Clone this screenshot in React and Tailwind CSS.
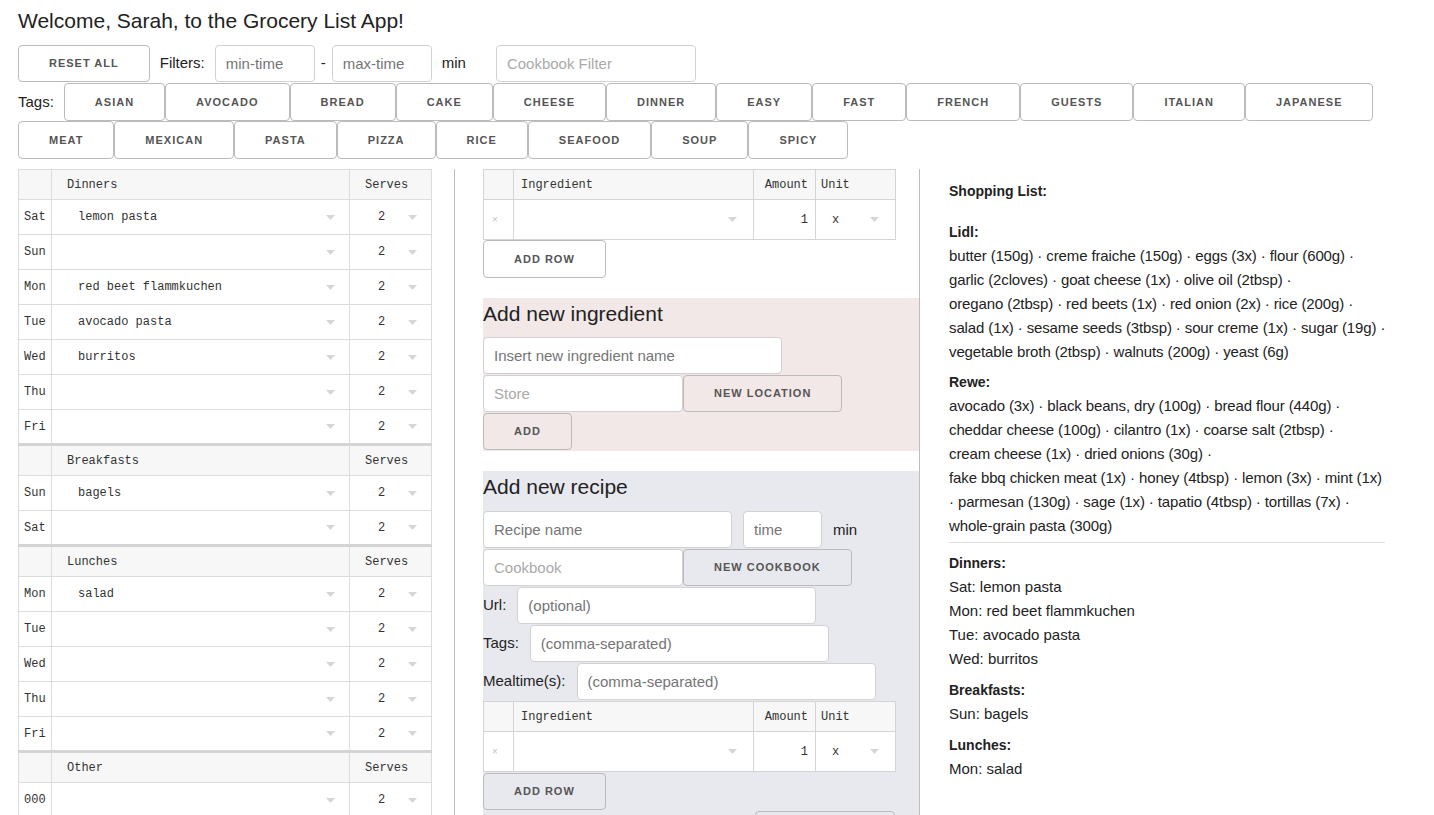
import React from 'react'

const TAGS = [
  'asian', 'avocado', 'bread', 'cake', 'cheese', 'dinner', 'easy', 'fast', 'french', 'guests',
  'italian', 'japanese', 'meat', 'mexican', 'pasta', 'pizza', 'rice', 'seafood', 'soup', 'spicy',
]

const MEALS = [
  { name: 'Dinners', rows: [['Sat', 'lemon pasta'], ['Sun', ''], ['Mon', 'red beet flammkuchen'], ['Tue', 'avocado pasta'], ['Wed', 'burritos'], ['Thu', ''], ['Fri', '']] },
  { name: 'Breakfasts', rows: [['Sun', 'bagels'], ['Sat', '']] },
  { name: 'Lunches', rows: [['Mon', 'salad'], ['Tue', ''], ['Wed', ''], ['Thu', ''], ['Fri', '']] },
  { name: 'Other', rows: [['000', '']] },
]

const STORES = [
  {
    name: 'Lidl',
    lines: [
      'butter (150g) · creme fraiche (150g) · eggs (3x) · flour (600g) ·',
      'garlic (2cloves) · goat cheese (1x) · olive oil (2tbsp) ·',
      'oregano (2tbsp) · red beets (1x) · red onion (2x) · rice (200g) ·',
      'salad (1x) · sesame seeds (3tbsp) · sour creme (1x) · sugar (19g) ·',
      'vegetable broth (2tbsp) · walnuts (200g) · yeast (6g)',
    ],
  },
  {
    name: 'Rewe',
    lines: [
      'avocado (3x) · black beans, dry (100g) · bread flour (440g) ·',
      'cheddar cheese (100g) · cilantro (1x) · coarse salt (2tbsp) ·',
      'cream cheese (1x) · dried onions (30g) ·',
      'fake bbq chicken meat (1x) · honey (4tbsp) · lemon (3x) · mint (1x)',
      '· parmesan (130g) · sage (1x) · tapatio (4tbsp) · tortillas (7x) ·',
      'whole-grain pasta (300g)',
    ],
  },
]

const PLAN = [
  { name: 'Dinners', lines: ['Sat: lemon pasta', 'Mon: red beet flammkuchen', 'Tue: avocado pasta', 'Wed: burritos'] },
  { name: 'Breakfasts', lines: ['Sun: bagels'] },
  { name: 'Lunches', lines: ['Mon: salad'] },
]

// skeleton-ish button, height set per use
const btn = 'shrink-0 px-[30px] border border-[#bbb] rounded-[4px] bg-transparent text-[11px] font-semibold tracking-[1px] uppercase text-[#555] whitespace-nowrap'
const input = 'h-[37px] px-[10px] border border-[#d1d1d1] rounded-[4px] bg-white text-[15px] text-[#222] placeholder:text-[#757575] outline-none'

function Caret() {
  return (
    <svg width="9" height="5" viewBox="0 0 9 5" className="shrink-0">
      <polygon points="0,0 9,0 4.5,5" fill="#d6d6d6" />
    </svg>
  )
}

// ── Meal plan table ──────────────────────────────────────────

function MealTable() {
  const cell = 'border border-[#dcdcdc] p-0'
  return (
    <table className="w-[413px] border-collapse font-['Liberation_Mono','Courier_New',monospace] text-[12px] text-[#333] table-fixed">
      <colgroup>
        <col className="w-[33px]" />
        <col className="w-[298px]" />
        <col className="w-[82px]" />
      </colgroup>
      <tbody>
        {MEALS.map((meal, gi) => (
          <React.Fragment key={meal.name}>
            <tr className={`bg-[#f7f7f7] ${gi > 0 ? 'h-[31px] border-t-[3px] border-t-[#d4d4d4]' : 'h-[30px]'}`}>
              <td className={cell} />
              <td className={`${cell} pl-[15px]`}>{meal.name}</td>
              <td className={`${cell} pl-[15px]`}>Serves</td>
            </tr>
            {meal.rows.map(([day, dish], i) => (
              <tr key={i} className="h-[35px] bg-white">
                <td className={`${cell} pl-[5px]`}>{day}</td>
                <td className={cell}>
                  <div className="flex items-center justify-between pl-[26px] pr-[14px]">
                    <span>{dish}</span>
                    <Caret />
                  </div>
                </td>
                <td className={cell}>
                  <div className="flex items-center justify-between pl-[28px] pr-[14px]">
                    <span>2</span>
                    <Caret />
                  </div>
                </td>
              </tr>
            ))}
          </React.Fragment>
        ))}
      </tbody>
    </table>
  )
}

// ── Ingredient table ─────────────────────────────────────────

function IngredientTable() {
  const cell = 'border border-[#d4d4d4] p-0'
  return (
    <table className="w-[412px] border-collapse font-['Liberation_Mono','Courier_New',monospace] text-[12px] text-[#333] table-fixed">
      <colgroup>
        <col className="w-[30px]" />
        <col className="w-[240px]" />
        <col className="w-[62px]" />
        <col className="w-[80px]" />
      </colgroup>
      <tbody>
        <tr className="h-[30px] bg-[#f7f7f7]">
          <td className={cell} />
          <td className={`${cell} pl-[7px]`}>Ingredient</td>
          <td className={`${cell} pr-[7px] text-right`}>Amount</td>
          <td className={`${cell} pl-[5px]`}>Unit</td>
        </tr>
        <tr className="h-[40px] bg-white">
          <td className={`${cell} pl-[8px] text-[10px] text-[#c4c4c4] font-['Liberation_Sans',Arial,sans-serif]`}>×</td>
          <td className={cell}>
            <div className="flex justify-end pr-[16px]"><Caret /></div>
          </td>
          <td className={`${cell} pr-[7px] text-right`}>1</td>
          <td className={cell}>
            <div className="flex items-center justify-between pl-[16px] pr-[16px]">
              <span>x</span>
              <Caret />
            </div>
          </td>
        </tr>
      </tbody>
    </table>
  )
}

// ── Forms column ─────────────────────────────────────────────

function Forms() {
  return (
    <div className="w-[466px] shrink-0 border-x border-[#bdbdbd] pl-[28px] pb-10">
      <IngredientTable />
      <div className="flex">
        <button className={`${btn} h-[38px]`}>Add row</button>
      </div>

      <div className="mt-[20px] bg-[#f1e8e7] pb-[1px] flex flex-col gap-[1px]">
        <h4 className="text-[21px] leading-[32px] text-[#222] mb-[6px]">Add new ingredient</h4>
        <div className="flex">
          <input className={`${input} w-[299px]`} placeholder="Insert new ingredient name" />
        </div>
        <div className="flex items-center">
          <input className={`${input} h-[35px] w-[200px] placeholder:text-[#aaa]`} placeholder="Store" />
          <button className={`${btn} h-[37px]`}>New location</button>
        </div>
        <div className="flex">
          <button className={`${btn} h-[37px]`}>Add</button>
        </div>
      </div>

      <div className="mt-[20px] bg-[#e8e9ee] flex flex-col gap-[1px]">
        <h4 className="text-[21px] leading-[32px] text-[#222] mb-[7px]">Add new recipe</h4>
        <div className="flex items-center text-[15px] text-[#222]">
          <input className={`${input} w-[249px]`} placeholder="Recipe name" />
          <input className={`${input} w-[79px] ml-[11px]`} placeholder="time" />
          <span className="ml-[11px] mt-[2px]">min</span>
        </div>
        <div className="flex items-center">
          <input className={`${input} h-[35px] w-[200px] placeholder:text-[#aaa]`} placeholder="Cookbook" />
          <button className={`${btn} h-[37px]`}>New cookbook</button>
        </div>
        <div className="flex items-center gap-[11px] text-[15px] text-[#222]">
          <span>Url:</span>
          <input className={`${input} w-[299px]`} placeholder="(optional)" />
        </div>
        <div className="flex items-center gap-[11px] text-[15px] text-[#222]">
          <span>Tags:</span>
          <input className={`${input} w-[299px]`} placeholder="(comma-separated)" />
        </div>
        <div className="flex items-center gap-[11px] text-[15px] text-[#222]">
          <span>Mealtime(s):</span>
          <input className={`${input} w-[299px]`} placeholder="(comma-separated)" />
        </div>
        <IngredientTable />
        <div className="flex">
          <button className={`${btn} h-[37px]`}>Add row</button>
        </div>
        <div className="w-[412px] flex justify-end">
          <button className={`${btn} h-[38px]`}>Add recipe</button>
        </div>
      </div>
    </div>
  )
}

// ── Shopping list ────────────────────────────────────────────

function ShoppingList() {
  return (
    <div className="flex-1 min-w-0 pl-[29px] pr-[31px] pt-[10px] text-[15px] leading-[24px] text-[#222]">
      <div className="text-[14px] font-bold mb-[17px]">Shopping List:</div>
      {STORES.map(store => (
        <div key={store.name} className="mb-[6px]">
          <div className="text-[14px] font-bold">{store.name}:</div>
          {store.lines.map((line, i) => <div key={i} className="whitespace-nowrap tracking-[-0.12px]">{line}</div>)}
        </div>
      ))}
      <hr className="border-0 border-t border-[#e1e1e1] mt-[-2px] mb-[8px]" />
      {PLAN.map(group => (
        <div key={group.name} className="mb-[7px]">
          <div className="text-[14px] font-bold">{group.name}:</div>
          {group.lines.map((line, i) => <div key={i}>{line}</div>)}
        </div>
      ))}
    </div>
  )
}

export default function App() {
  return (
    <div className="min-h-screen bg-white px-[18px] font-['Liberation_Sans',Arial,sans-serif] text-[#222]">
      <h4 className="pt-[6px] text-[21px] leading-[30px] text-[#222] mb-[9px]">Welcome, Sarah, to the Grocery List App!</h4>

      <div className="flex items-center h-[37px] text-[15px]">
        <button className={`${btn} h-[37px]`}>Reset all</button>
        <span className="ml-[10px]">Filters:</span>
        <input className={`${input} w-[100px] ml-[10px]`} placeholder="min-time" />
        <span className="mx-[6px]">-</span>
        <input className={`${input} w-[100px]`} placeholder="max-time" />
        <span className="ml-[10px]">min</span>
        <input className={`${input} w-[200px] ml-[30px] placeholder:text-[#aaa]`} placeholder="Cookbook Filter" />
      </div>

      <div className="flex flex-wrap items-center mt-[1px]">
        <span className="text-[15px] mr-[10px]">Tags:</span>
        {TAGS.map(tag => (
          <button key={tag} className={`${btn} h-[38px]`}>{tag}</button>
        ))}
      </div>

      <div className="flex items-start mt-[10px]">
        <div className="w-[413px] shrink-0">
          <MealTable />
        </div>
        <div className="w-[23px] shrink-0" />
        <Forms />
        <ShoppingList />
      </div>
    </div>
  )
}
